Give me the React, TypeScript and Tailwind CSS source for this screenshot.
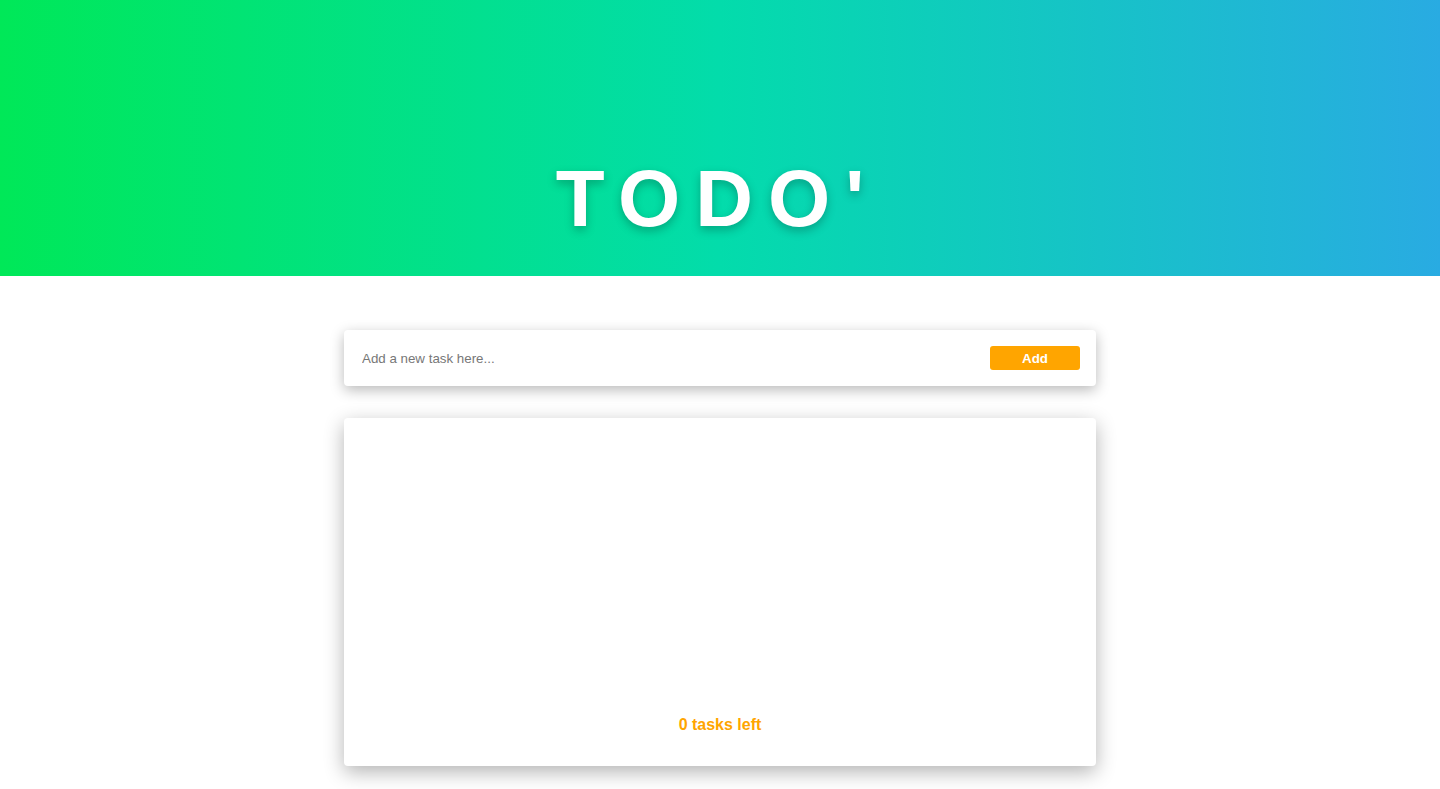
import React from "react";

export default function App() {
  return (
    <div className="min-h-screen bg-white" style={{ fontFamily: '"Liberation Sans", Arial, sans-serif' }}>
      <header className="h-[276px] bg-[linear-gradient(to_right,#00e858,#03dcab_50%,#29abe2)] flex items-end justify-center pb-[31px]">
        <h1 className="text-[80px] leading-[92px] font-bold text-white tracking-[15px] pr-[5px] [text-shadow:0_4px_10px_rgba(0,0,0,0.25)]">
          TODO'
        </h1>
      </header>
      <main className="flex flex-col items-center pt-[54px] gap-[32px]">
        <div className="w-[752px] h-[56px] bg-white rounded-[4px] shadow-[0_4px_14px_rgba(0,0,0,0.28)] flex items-center pl-[18px] pr-[16px]">
          <input
            className="flex-1 outline-none text-[13.33px] pt-[1px] text-gray-700 placeholder:text-[#777] bg-transparent"
            placeholder="Add a new task here..."
          />
          <button className="w-[90px] h-[24px] bg-[#ffa500] rounded-[3px] text-white text-[13.33px] font-bold pt-[1px]">
            Add
          </button>
        </div>
        <div className="w-[752px] h-[348px] bg-white rounded-[4px] shadow-[0_6px_20px_rgba(0,0,0,0.3)] flex flex-col justify-end items-center pb-[29px]">
          <p className="text-[#ffa500] font-bold text-[16px]">0 tasks left</p>
        </div>
      </main>
    </div>
  );
}
